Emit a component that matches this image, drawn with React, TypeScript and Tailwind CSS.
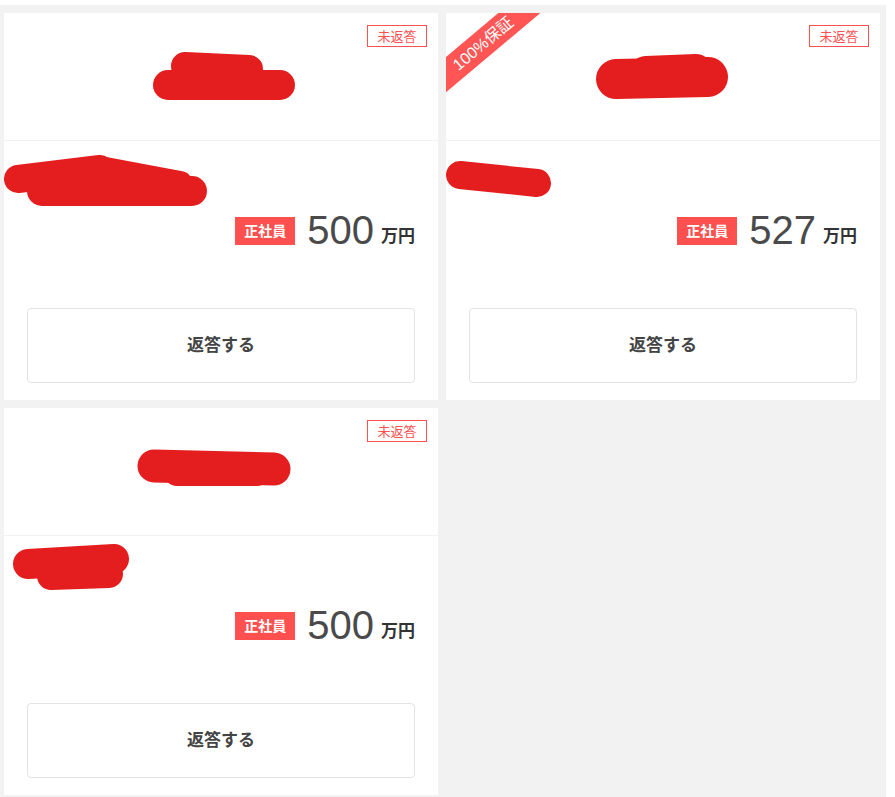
type Stroke = [number, number, number, number, number];

type Blob = {
  w: number;
  h: number;
  ml: number;
  mt: number;
  strokes: Stroke[];
};

type Offer = {
  id: number;
  guaranteed: boolean;
  salary: number;
  head: Blob;
  title: Blob;
};

const offers: Offer[] = [
  {
    id: 1,
    guaranteed: false,
    salary: 500,
    head: {
      w: 142,
      h: 48,
      ml: 149,
      mt: 39,
      strokes: [
        [15, 33, 127, 33, 30],
        [32, 14, 96, 17, 28],
      ],
    },
    title: {
      w: 204,
      h: 52,
      ml: 0,
      mt: 13,
      strokes: [
        [14, 25, 96, 15, 28],
        [96, 15, 176, 30, 26],
        [38, 37, 188, 37, 30],
      ],
    },
  },
  {
    id: 2,
    guaranteed: true,
    salary: 527,
    head: {
      w: 132,
      h: 48,
      ml: 150,
      mt: 40,
      strokes: [
        [20, 26, 112, 24, 40],
        [50, 20, 100, 18, 34],
      ],
    },
    title: {
      w: 106,
      h: 40,
      ml: 0,
      mt: 18,
      strokes: [[14, 16, 91, 24, 28]],
    },
  },
  {
    id: 3,
    guaranteed: false,
    salary: 500,
    head: {
      w: 154,
      h: 38,
      ml: 133,
      mt: 41,
      strokes: [
        [17, 17, 137, 20, 33],
        [40, 24, 120, 24, 26],
      ],
    },
    title: {
      w: 118,
      h: 48,
      ml: 9,
      mt: 8,
      strokes: [
        [15, 20, 101, 15, 30],
        [38, 32, 96, 30, 28],
      ],
    },
  },
];

// redaction scribble from the screenshot
function Scribble({ blob }: { blob: Blob }) {
  return (
    <svg
      width={blob.w}
      height={blob.h}
      viewBox={`0 0 ${blob.w} ${blob.h}`}
      className="block shrink-0"
      style={{ marginLeft: blob.ml, marginTop: blob.mt }}
    >
      {blob.strokes.map(([x1, y1, x2, y2, sw], i) => (
        <line
          key={i}
          x1={x1}
          y1={y1}
          x2={x2}
          y2={y2}
          stroke="#e41e1e"
          strokeWidth={sw}
          strokeLinecap="round"
        />
      ))}
    </svg>
  );
}

function OfferCard({ offer }: { offer: Offer }) {
  return (
    <div className="relative h-[387px] overflow-hidden bg-white">
      {offer.guaranteed && (
        <div className="absolute left-[-43px] top-[17px] z-10 flex h-[27px] w-[160px] -rotate-40 items-center justify-center bg-[#ff5555] text-[16px] leading-none text-white">
          100%保証
        </div>
      )}
      <div className="relative flex h-[128px] items-start border-b border-[#f2f2f2]">
        <div className="absolute right-[11px] top-[12px] flex h-[22px] w-[60px] items-center justify-center border border-[#ff5050] text-[13px] leading-none text-[#ff5050]">
          未返答
        </div>
        <Scribble blob={offer.head} />
      </div>
      <div className="flex flex-col px-[23px] pb-[16px]">
        <div className="-mx-[23px] flex h-[74px] items-start">
          <Scribble blob={offer.title} />
        </div>
        <div className="flex items-end justify-end">
          <span className="flex h-[28px] w-[60px] items-center justify-center bg-[#ff5050] text-[14px] font-bold leading-none text-white">
            正社員
          </span>
          <span className="ml-[12px] text-[40px] leading-[30px] text-[#4a4a4a]">
            {offer.salary}
          </span>
          <span className="ml-[7px] text-[17px] font-bold leading-none text-[#333]">
            万円
          </span>
        </div>
        <button className="mt-[63px] flex h-[75px] w-full items-center justify-center rounded-[4px] border border-[#e3e3e3] bg-white text-[17px] font-bold text-[#444]">
          返答する
        </button>
      </div>
    </div>
  );
}

export default function App() {
  return (
    <div
      className="min-h-screen bg-white pt-[5px]"
      style={{ fontFamily: '"Liberation Sans", "Noto Sans CJK JP", sans-serif' }}
    >
      <div className="w-[886px] bg-[#f2f2f2] pb-2 pl-1 pr-[6px] pt-2">
        <div className="grid grid-cols-[434px_434px] gap-2">
          {offers.map((o) => (
            <OfferCard key={o.id} offer={o} />
          ))}
        </div>
      </div>
    </div>
  );
}
